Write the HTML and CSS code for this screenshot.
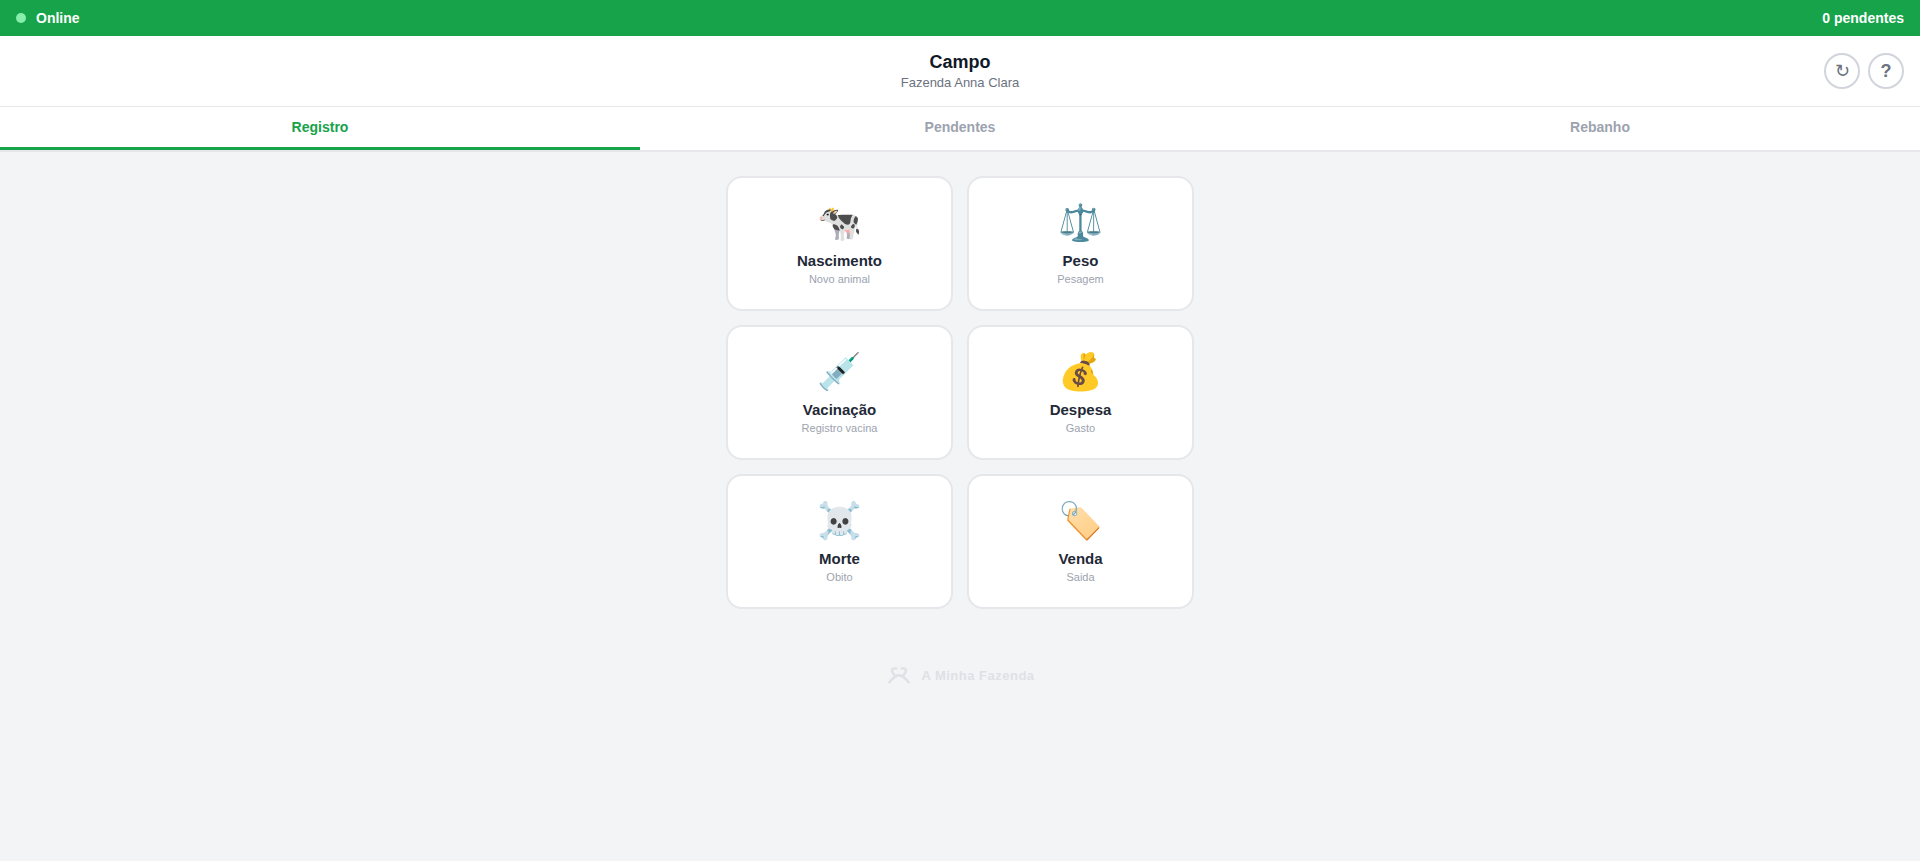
FILE: index.html
```
<!DOCTYPE html>
<html lang="pt-BR">
<head>
<meta charset="utf-8">
<title>Campo</title>
<link rel="stylesheet" href="styles.css">
</head>
<body>
<div class="status"><div class="status-left"><span class="dot"></span><span>Online</span></div><span>0 pendentes</span></div>
<header class="header">
  <div class="side"></div>
  <div class="title"><h1>Campo</h1><p>Fazenda Anna Clara</p></div>
  <div class="side actions"><button class="round">↻</button><button class="round help">?</button></div>
</header>
<nav class="tabs"><button class="tab active">Registro</button><button class="tab">Pendentes</button><button class="tab">Rebanho</button></nav>
<main class="grid">
  <button class="card"><span class="icon">🐄</span><span class="name">Nascimento</span><span class="desc">Novo animal</span></button>
  <button class="card"><span class="icon">⚖️</span><span class="name">Peso</span><span class="desc">Pesagem</span></button>
  <button class="card"><span class="icon">💉</span><span class="name">Vacinação</span><span class="desc">Registro vacina</span></button>
  <button class="card"><span class="icon">💰</span><span class="name">Despesa</span><span class="desc">Gasto</span></button>
  <button class="card"><span class="icon">☠️</span><span class="name">Morte</span><span class="desc">Obito</span></button>
  <button class="card"><span class="icon">🏷️</span><span class="name">Venda</span><span class="desc">Saida</span></button>
</main>
<footer class="brand">
  <svg class="logo" viewBox="-1 0 26 26"><path d="M3.3 20.3C7 15.8 9.2 13.2 13 13.2S19 15.8 22.7 20.3M10.4 6.4H8.2C5.8 6.4 5.6 9 6.6 10.4L8.7 13.6M15.6 6.4H17.8C20.2 6.4 20.4 9 19.4 10.4L17.3 13.6"/></svg>
  <span>A Minha Fazenda</span>
</footer>
</body>
</html>
```
FILE: styles.css
```
* { box-sizing: border-box; margin: 0; padding: 0; }
body { min-height: 100vh; background: #f3f4f6; color: #111827; font-family: "Liberation Sans", Arial, sans-serif; }
button { font-family: inherit; }
.status { height: 36px; padding: 0 16px; display: flex; align-items: center; justify-content: space-between; background: #16a34a; color: #fff; font-size: 14px; font-weight: 600; }
.status-left { display: flex; align-items: center; gap: 10px; }
.dot { width: 10px; height: 10px; border-radius: 50%; background: #86efac; }
.header { height: 71px; padding: 0 16px; display: flex; align-items: center; justify-content: space-between; background: #fff; border-bottom: 1px solid #e5e7eb; }
.side { width: 80px; }
.title { text-align: center; }
.title h1 { font-size: 18px; line-height: 20px; font-weight: 700; }
.title p { margin-top: 3px; font-size: 13px; line-height: 15px; color: #6b7280; }
.actions { display: flex; gap: 8px; }
.round { width: 36px; height: 36px; border: 2px solid #d1d5db; border-radius: 50%; background: #fff; color: #6b7280; font-size: 18px; }
.help { font-weight: 700; }
.tabs { height: 45px; display: flex; background: #fff; border-bottom: 2px solid #e5e7eb; }
.tab { flex: 1; height: 43px; border: 0; border-bottom: 3px solid transparent; background: none; color: #9ca3af; font-size: 14px; font-weight: 600; }
.active { color: #16a34a; border-color: #16a34a; }
.grid { width: 468px; margin: 24px auto 0; display: grid; grid-template-columns: 1fr 1fr; gap: 14px; }
.card { height: 135px; display: flex; flex-direction: column; align-items: center; justify-content: center; border: 2px solid #e5e7eb; border-radius: 16px; background: #fff; }
.icon { font-size: 36px; line-height: 42px; margin-bottom: 8px; color: #111827; }
.name { font-size: 15px; line-height: 17px; font-weight: 700; color: #1f2937; }
.desc { margin-top: 4px; font-size: 11px; line-height: 12px; color: #9ca3af; }
.brand { margin-top: 53px; display: flex; align-items: center; justify-content: center; gap: 10px; color: #d1d5db; font-size: 13px; font-weight: 600; letter-spacing: .5px; opacity: .6; }
.logo { width: 26px; height: 26px; fill: none; stroke: currentColor; stroke-width: 2.4; stroke-linecap: round; }
```
